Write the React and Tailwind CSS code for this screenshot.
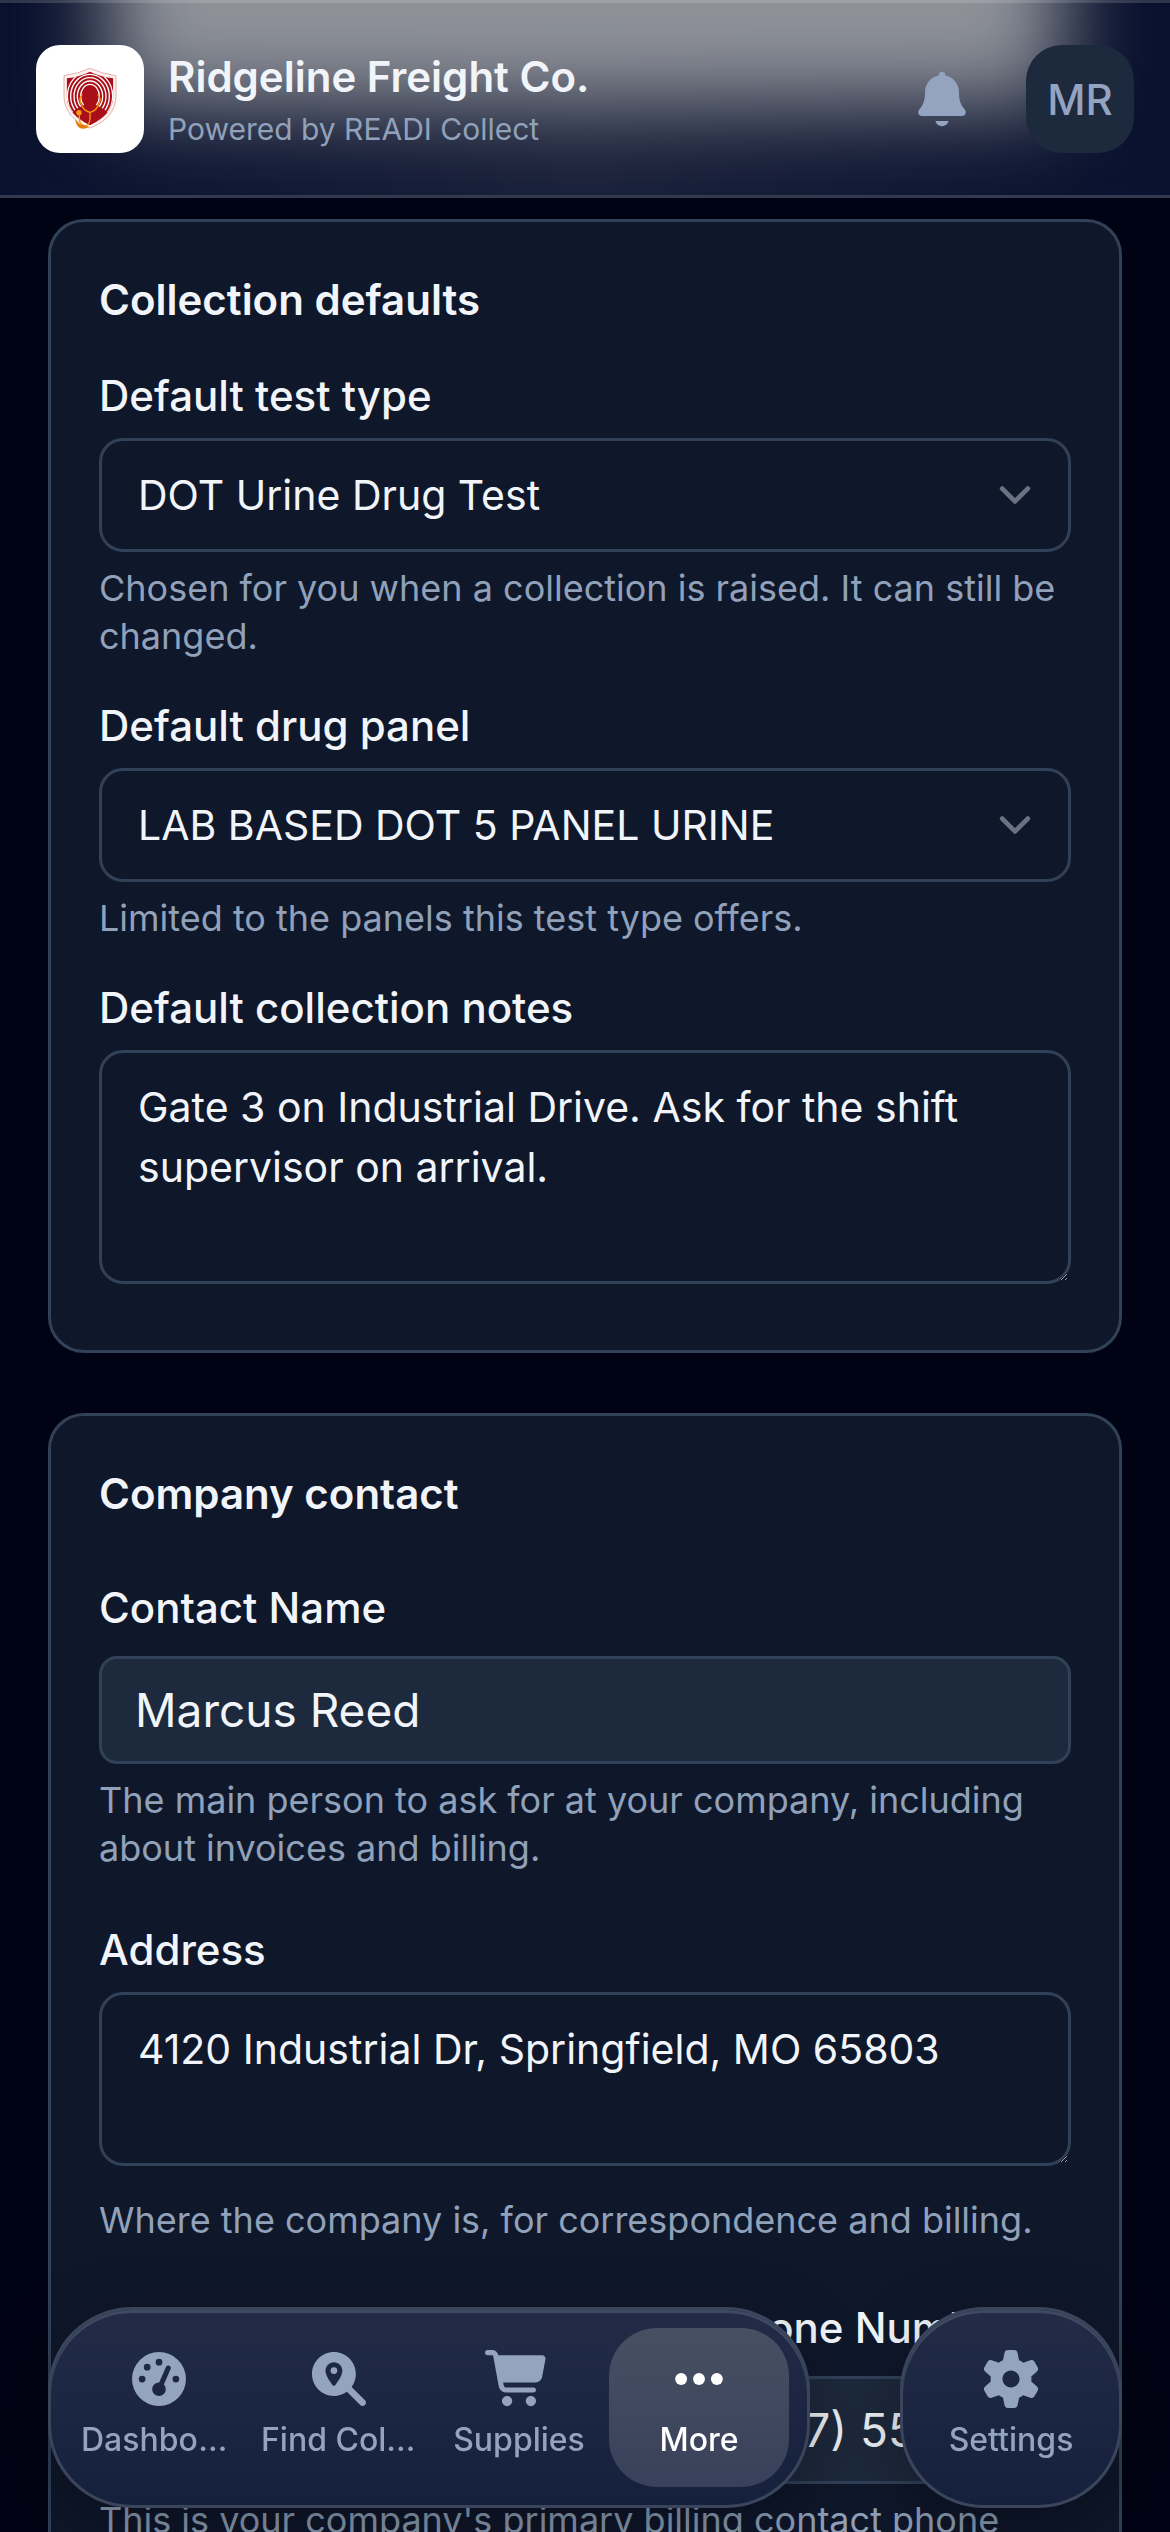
import React, { useState } from "react";
import { FaGaugeHigh, FaMagnifyingGlassLocation } from "react-icons/fa6";

const BellIcon = () => (
  <svg viewBox="0 0 640 640" fill="currentColor" className="size-[68px]" aria-hidden="true">
    <path d="M320 64C302.3 64 288 78.3 288 96L288 99.2C215 114 160 178.6 160 256L160 277.7C160 325.8 143.6 372.5 113.6 410.1L103.8 422.3C98.7 428.6 96 436.4 96 444.5C96 464.1 111.9 480 131.5 480L508.4 480C528 480 543.9 464.1 543.9 444.5C543.9 436.4 541.2 428.6 536.1 422.3L526.3 410.1C496.4 372.5 480 325.8 480 277.7L480 256C480 178.6 425 114 352 99.2L352 96C352 78.3 337.7 64 320 64zM258 528C265.1 555.6 290.2 576 320 576C349.8 576 374.9 555.6 382 528L258 528z" />
  </svg>
);

const CartIcon = () => (
  <svg viewBox="0 0 640 640" fill="currentColor" className="size-[68px]" aria-hidden="true">
    <path d="M24 48C10.7 48 0 58.7 0 72C0 85.3 10.7 96 24 96L69.3 96C73.2 96 76.5 98.8 77.2 102.6L129.3 388.9C135.5 423.1 165.3 448 200.1 448L456 448C469.3 448 480 437.3 480 424C480 410.7 469.3 400 456 400L200.1 400C188.5 400 178.6 391.7 176.5 380.3L171.4 352L475 352C505.8 352 532.2 330.1 537.9 299.8L568.9 133.9C572.6 114.2 557.5 96 537.4 96L124.7 96L124.3 94C119.5 67.4 96.3 48 69.2 48L24 48zM208 576C234.5 576 256 554.5 256 528C256 501.5 234.5 480 208 480C181.5 480 160 501.5 160 528C160 554.5 181.5 576 208 576zM432 576C458.5 576 480 554.5 480 528C480 501.5 458.5 480 432 480C405.5 480 384 501.5 384 528C384 554.5 405.5 576 432 576z" />
  </svg>
);

const MoreIcon = () => (
  <svg viewBox="0 0 640 640" fill="currentColor" className="size-[68px]" aria-hidden="true">
    <circle cx="152" cy="320" r="56" />
    <circle cx="320" cy="320" r="56" />
    <circle cx="488" cy="320" r="56" />
  </svg>
);

const GearIcon = () => (
  <svg viewBox="0 0 640 640" fill="currentColor" className="size-[68px]" aria-hidden="true">
    <path d="M259.1 73.5C262.1 58.7 275.2 48 290.4 48L350.2 48C365.4 48 378.5 58.7 381.5 73.5L396 143.5C410.1 149.5 423.3 157.2 435.3 166.3L503.1 143.8C517.5 139 533.3 145 540.9 158.2L570.8 210C578.4 223.2 575.7 239.8 564.3 249.9L511 297.3C511.9 304.7 512.3 312.3 512.3 320C512.3 327.7 511.8 335.3 511 342.7L564.4 390.2C575.8 400.3 578.4 417 570.9 430.1L541 481.9C533.4 495 517.6 501.1 503.2 496.3L435.4 473.8C423.3 482.9 410.1 490.5 396.1 496.6L381.7 566.5C378.6 581.4 365.5 592 350.4 592L290.6 592C275.4 592 262.3 581.3 259.3 566.5L244.9 496.6C230.8 490.6 217.7 482.9 205.6 473.8L137.5 496.3C123.1 501.1 107.3 495.1 99.7 481.9L69.8 430.1C62.2 416.9 64.9 400.3 76.3 390.2L129.7 342.7C128.8 335.3 128.4 327.7 128.4 320C128.4 312.3 128.9 304.7 129.7 297.3L76.3 249.8C64.9 239.7 62.3 223 69.8 209.9L99.7 158.1C107.3 144.9 123.1 138.9 137.5 143.7L205.3 166.2C217.4 157.1 230.6 149.5 244.6 143.4L259.1 73.5zM320.3 400C364.5 399.8 400.2 363.9 400 319.7C399.8 275.5 363.9 239.8 319.7 240C275.5 240.2 239.8 276.1 240 320.3C240.2 364.5 276.1 400.2 320.3 400z" />
  </svg>
);

// Shield with fingerprint rings, a silhouette and a stethoscope
const CompanyLogo = () => (
  <svg viewBox="0 0 240 240" className="size-20" role="img" aria-label="Company logo">
    <defs>
      <clipPath id="shield">
        <path d="M120 38 Q152 54 190 58 V112 Q188 168 120 198 Q52 168 50 112 V58 Q88 54 120 38Z" />
      </clipPath>
    </defs>
    <path
      d="M120 28 Q154 44 198 50 V112 Q196 178 120 207 Q44 178 42 112 V50 Q86 44 120 28Z"
      fill="#fdf1ef"
      stroke="#d98b83"
      strokeWidth="2"
    />
    <g clipPath="url(#shield)">
      <rect x="40" y="30" width="160" height="175" fill="#a80f19" />
      <g fill="none" stroke="#fff" strokeWidth="4">
        <ellipse cx="120" cy="112" rx="28" ry="36" />
        <ellipse cx="120" cy="112" rx="38" ry="46" />
        <ellipse cx="120" cy="112" rx="48" ry="56" />
        <ellipse cx="120" cy="112" rx="58" ry="66" />
        <ellipse cx="120" cy="112" rx="68" ry="76" />
      </g>
      <path
        d="M120 80 C135 80 142 90 141 106 C140 120 135 126 133 133 C136 141 156 144 168 156 L182 172 L120 204 L58 172 L72 156 C84 144 104 141 107 133 C105 126 100 120 99 106 C98 90 105 80 120 80Z"
        fill="#a80f19"
      />
    </g>
    <g fill="none" stroke="#f79a10" strokeWidth="4" strokeLinecap="round">
      <path d="M96 108 Q86 116 92 132 Q100 156 120 160 Q140 156 148 132 Q154 116 144 108" />
      <path d="M120 160 V180 Q118 202 102 200 Q88 196 88 176 V162" />
    </g>
    <circle cx="87" cy="161" r="8" fill="#f79a10" />
    <path d="M76 180 Q84 200 118 203 Q102 214 88 206 Q76 196 76 180Z" fill="#e07c0a" />
  </svg>
);

const Label = ({ htmlFor, children }) => (
  <label htmlFor={htmlFor} className="block text-[42px] leading-[60px] font-medium">
    {children}
  </label>
);

const Hint = ({ children }) => (
  <p className="mt-3 text-[36px] leading-[48px] text-slate-400">{children}</p>
);

const SelectField = ({ id, label, hint, options }) => (
  <div>
    <Label htmlFor={id}>{label}</Label>
    <div className="relative mt-3">
      <select
        id={id}
        className="block w-full appearance-none rounded-3xl border-3 border-slate-700 bg-slate-900 py-6 pr-28 pl-9 text-[41px] leading-[60px]"
      >
        {options.map((option) => (
          <option key={option}>{option}</option>
        ))}
      </select>
      <svg
        viewBox="0 0 20 20"
        fill="none"
        className="pointer-events-none absolute inset-y-0 right-6 my-auto size-16 text-gray-500"
        aria-hidden="true"
      >
        <path d="M6 8l4 4 4-4" stroke="currentColor" strokeWidth="1.5" strokeLinecap="round" strokeLinejoin="round" />
      </svg>
    </div>
    {hint && <Hint>{hint}</Hint>}
  </div>
);

const TextAreaField = ({ id, label, hint, rows, defaultValue }) => (
  <div>
    <Label htmlFor={id}>{label}</Label>
    <div className="pt-3 pb-[18px]">
      <textarea
        id={id}
        rows={rows}
        defaultValue={defaultValue}
        className="block w-full rounded-3xl border-3 border-slate-700 bg-slate-900 px-9 py-6 text-[41px] leading-[60px]"
      />
    </div>
    {hint && <Hint>{hint}</Hint>}
  </div>
);

const inputStyle =
  "block w-full rounded-[18px] border-3 border-slate-700 bg-slate-800 px-[33px] py-[15px] text-[46px] leading-[72px]";

const TextInput = ({ id, label, type = "text", defaultValue }) => (
  <div className="pt-[6px]">
    <Label htmlFor={id}>{label}</Label>
    <div className="mt-[18px]">
      <input id={id} type={type} defaultValue={defaultValue} className={inputStyle} />
    </div>
  </div>
);

const Card = ({ title, children }) => (
  <section className="rounded-[36px] border-3 border-slate-700 bg-slate-900 p-12">
    <h2 className="text-[42px] leading-[60px] font-semibold">{title}</h2>
    {children}
  </section>
);

const NavItem = ({ icon, label, active, onClick }) => (
  <button
    type="button"
    onClick={onClick}
    className={
      "flex h-[159px] w-[180px] flex-col items-center rounded-[48px] px-3 pt-[17px] " +
      (active ? "bg-linear-to-b from-[#465063] to-[#39415a] text-white" : "text-[#94a3c0]")
    }
  >
    <span className="flex size-[68px] items-center justify-center text-[54px]">{icon}</span>
    <span className="mt-[6px] block w-full truncate text-center text-[32px] leading-[42px] font-medium">{label}</span>
  </button>
);

const navItems = [
  { id: "dashboard", label: "Dashboard", icon: <FaGaugeHigh /> },
  { id: "find", label: "Find Collector", icon: <FaMagnifyingGlassLocation /> },
  { id: "supplies", label: "Supplies", icon: <CartIcon /> },
  { id: "more", label: "More", icon: <MoreIcon /> },
];

const navPill =
  "pointer-events-auto flex rounded-[84px] border-3 border-[#3a445b] bg-linear-to-b from-[#222c47] to-[#15203d] p-[18px] shadow-[inset_0_3px_0_#3f4a60,0_24px_72px_rgba(0,0,0,0.35)]";

const App = () => {
  const [active, setActive] = useState("more");

  return (
    <div className="flex h-screen flex-col bg-[#000314] font-[Inter,sans-serif] text-slate-100">
      <header className="relative flex items-center overflow-hidden border-b-3 border-[#323a50] bg-linear-to-r from-[#09112e] via-[#1a213a] to-[#09112e] px-9 pt-[45px] pb-[42px]">
        <div className="absolute inset-x-[108px] -top-40 h-[264px] bg-[#8e9198] blur-[42px]" />
        <div className="absolute inset-x-0 top-0 h-[3px] bg-white/15" />
        <div className="relative flex size-[108px] shrink-0 items-center justify-center rounded-3xl bg-white">
          <CompanyLogo />
        </div>
        <div className="relative ml-6 min-w-0 flex-1">
          <h1 className="truncate text-[42px] leading-[60px] font-semibold">Ridgeline Freight Co.</h1>
          <p className="truncate text-[30px] leading-[45px] text-slate-400">Powered by READI Collect</p>
        </div>
        <button type="button" aria-label="Notifications" className="relative mr-[50px] text-[#94a3c0]">
          <BellIcon />
        </button>
        <button
          type="button"
          className="relative size-[108px] rounded-[36px] bg-slate-800 text-[42px] font-medium text-[#94a3c0]"
        >
          MR
        </button>
      </header>

      <main className="min-h-0 flex-1 space-y-[60px] overflow-y-auto px-12 pt-[21px] pb-60 [scrollbar-width:none]">
        <Card title="Collection defaults">
          <div className="mt-9 space-y-9">
            <SelectField
              id="test-type"
              label="Default test type"
              options={["DOT Urine Drug Test"]}
              hint="Chosen for you when a collection is raised. It can still be changed."
            />
            <SelectField
              id="drug-panel"
              label="Default drug panel"
              options={["LAB BASED DOT 5 PANEL URINE"]}
              hint="Limited to the panels this test type offers."
            />
            <TextAreaField
              id="notes"
              label="Default collection notes"
              rows={3}
              defaultValue="Gate 3 on Industrial Drive. Ask for the shift supervisor on arrival."
            />
          </div>
        </Card>

        <Card title="Company contact">
          <div className="mt-12 space-y-12">
            <div>
              <TextInput id="contact-name" label="Contact Name" defaultValue="Marcus Reed" />
              <Hint>The main person to ask for at your company, including about invoices and billing.</Hint>
            </div>
            <TextAreaField
              id="address"
              label="Address"
              rows={2}
              defaultValue="4120 Industrial Dr, Springfield, MO 65803"
              hint="Where the company is, for correspondence and billing."
            />
            <div>
              <div className="grid grid-cols-[593px_1fr] items-end gap-3">
                <input type="text" aria-label="Country" className={inputStyle} />
                <TextInput
                  id="phone"
                  label={<span className="pl-3">Phone Number</span>}
                  type="tel"
                  defaultValue="(417) 555-0142"
                />
              </div>
              <Hint>This is your company's primary billing contact phone number.</Hint>
            </div>
          </div>
        </Card>
      </main>

      <nav className="pointer-events-none fixed inset-x-12 bottom-6 flex justify-between">
        <div className={navPill}>
          {navItems.map((item) => (
            <NavItem
              key={item.id}
              icon={item.icon}
              label={item.label}
              active={active === item.id}
              onClick={() => setActive(item.id)}
            />
          ))}
        </div>
        <div className={navPill}>
          <NavItem
            icon={<GearIcon />}
            label="Settings"
            active={active === "settings"}
            onClick={() => setActive("settings")}
          />
        </div>
      </nav>
    </div>
  );
};

export default App;
